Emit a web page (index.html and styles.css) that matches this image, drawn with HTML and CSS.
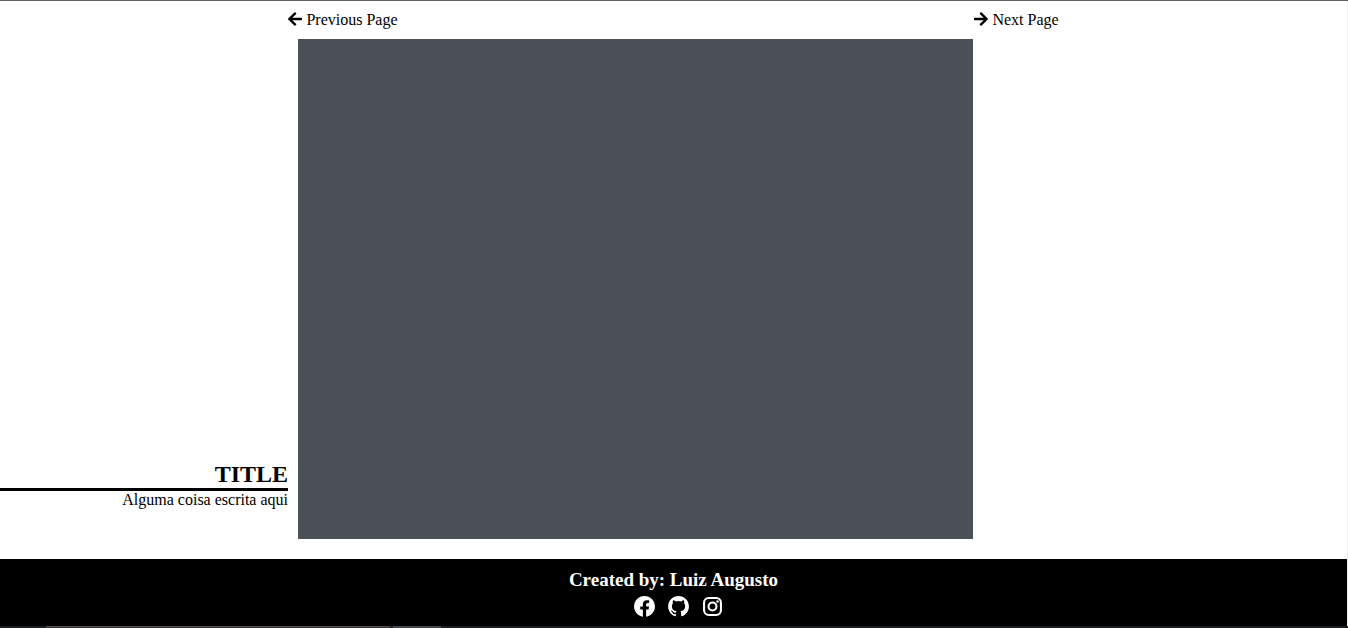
FILE: index.html
```html
<!DOCTYPE html>
<html lang="pt">
<head>
<meta charset="utf-8">
<title>Title</title>
<link rel="stylesheet" href="styles.css">
</head>
<body>
<div class="page">
  <nav class="pager">
    <a href="#previous"><svg class="arrow" viewBox="0 0 448 512" aria-hidden="true"><path d="M257.5 445.1l-22.2 22.2c-9.4 9.4-24.6 9.4-33.9 0L7 273c-9.4-9.4-9.4-24.6 0-33.9L201.4 44.7c9.4-9.4 24.6-9.4 33.9 0l22.2 22.2c9.5 9.5 9.3 25-.4 34.3L136.6 216H424c13.3 0 24 10.7 24 24v32c0 13.3-10.7 24-24 24H136.6l120.5 114.8c9.8 9.3 10 24.8.4 34.3z"/></svg> Previous Page</a>
    <a href="#next"><svg class="arrow" viewBox="0 0 448 512" aria-hidden="true"><path d="M190.5 66.9l22.2-22.2c9.4-9.4 24.6-9.4 33.9 0L441 239c9.4 9.4 9.4 24.6 0 33.9L246.6 467.3c-9.4 9.4-24.6 9.4-33.9 0l-22.2-22.2c-9.5-9.5-9.3-25 .4-34.3L311.4 296H24c-13.3 0-24-10.7-24-24v-32c0-13.3 10.7-24 24-24h287.4L190.9 101.2c-9.8-9.3-10-24.8-.4-34.3z"/></svg> Next Page</a>
  </nav>
  <main class="content">
    <section class="caption">
      <h1>TITLE</h1>
      <p>Alguma coisa escrita aqui</p>
    </section>
    <div class="panel"></div>
  </main>
  <footer class="footer">
    <h2>Created by: Luiz Augusto</h2>
    <div class="social">
      <a href="#facebook" aria-label="Facebook"><svg viewBox="0 0 24 24"><path d="M12.001 2.002c-5.522 0-9.999 4.477-9.999 9.999 0 4.99 3.656 9.126 8.437 9.879v-6.988h-2.54v-2.891h2.54V9.798c0-2.508 1.493-3.891 3.776-3.891 1.094 0 2.24.195 2.24.195v2.459h-1.264c-1.24 0-1.628.772-1.628 1.563v1.875h2.771l-.443 2.891h-2.328v6.988C18.344 21.129 22 16.992 22 12.001c0-5.522-4.477-9.999-9.999-9.999z"/></svg></a>
      <a href="#github" aria-label="GitHub"><svg viewBox="0 0 24 24"><path d="M12.026 2c-5.509 0-9.974 4.465-9.974 9.974 0 4.406 2.857 8.145 6.821 9.465.499.09.679-.217.679-.481 0-.237-.008-.865-.011-1.696-2.775.602-3.361-1.338-3.361-1.338-.452-1.152-1.107-1.459-1.107-1.459-.905-.619.069-.605.069-.605 1.002.07 1.527 1.028 1.527 1.028.89 1.524 2.336 1.084 2.902.829.091-.645.351-1.085.635-1.334-2.214-.251-4.542-1.107-4.542-4.93 0-1.087.389-1.979 1.024-2.675-.101-.253-.446-1.268.099-2.64 0 0 .837-.269 2.742 1.021a9.582 9.582 0 0 1 2.496-.336 9.554 9.554 0 0 1 2.496.336c1.906-1.291 2.742-1.021 2.742-1.021.545 1.372.203 2.387.099 2.64.64.696 1.024 1.587 1.024 2.675 0 3.833-2.33 4.675-4.552 4.922.355.308.675.916.675 1.846 0 1.334-.012 2.41-.012 2.737 0 .267.178.577.687.479C19.146 20.115 22 16.379 22 11.974 22 6.465 17.535 2 12.026 2z"/></svg></a>
      <a href="#instagram" aria-label="Instagram"><svg viewBox="0 0 24 24"><rect x="3.9" y="3.9" width="16.2" height="16.2" rx="4.4" fill="none" stroke="currentColor" stroke-width="2"/><circle cx="12" cy="12" r="3.8" fill="none" stroke="currentColor" stroke-width="2"/><circle cx="16.8" cy="7.2" r="1.2"/></svg></a>
    </div>
  </footer>
  <div class="taskbar"><span class="window"></span><span class="tab"></span></div>
</div>
</body>
</html>
```
FILE: styles.css
```css
* {
  box-sizing: border-box;
  margin: 0;
  padding: 0;
}

body {
  font-family: "Liberation Serif", "Times New Roman", serif;
  font-size: 16px;
  line-height: 18px;
  color: #000;
  background: #fff;
}

a {
  color: inherit;
  text-decoration: none;
}

svg {
  fill: currentColor;
}

.page {
  display: flex;
  flex-direction: column;
  min-height: 100vh;
  border-top: 1px solid #5f5f61;
}

.pager {
  display: flex;
  justify-content: space-around;
  padding: 10px 0;
  border-right: 1px solid #eee;
}

.arrow {
  width: 14px;
  height: 16px;
  vertical-align: -2px;
}

.content {
  display: flex;
  gap: 10px;
  padding-bottom: 20px;
  border-right: 1px solid #eee;
}

.caption {
  flex: 0 0 288px;
  align-self: flex-end;
  padding-bottom: 30px;
  text-align: right;
}

.caption h1 {
  font-size: 24px;
  line-height: 27px;
  border-bottom: 3px solid #000;
}

.panel {
  flex: 1;
  height: 500px;
  margin-right: 374px;
  background: #4b5159;
}

.footer {
  flex: 1;
  padding-top: 10px;
  text-align: center;
  color: #fff;
  background: #000;
  border-right: 1px solid #eee;
}

.footer h2 {
  font-size: 19px;
  line-height: 22px;
}

.social {
  display: flex;
  justify-content: center;
  padding-top: 3px;
}

.social a {
  display: flex;
  margin-left: 9px;
}

.social svg {
  width: 25px;
  height: 25px;
}

.taskbar {
  display: flex;
  gap: 3px;
  height: 2px;
  padding-left: 46px;
  background: #191c24;
}

.window {
  width: 344px;
  background: #383433;
  border-top: 1px solid #555150;
}

.tab {
  width: 48px;
  background: #454850;
}
```
